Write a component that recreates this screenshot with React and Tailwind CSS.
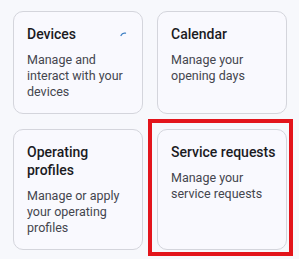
import React from 'react';

const cards = [
  { title: 'Devices', desc: 'Manage and interact with your devices', spinner: true },
  { title: 'Calendar', desc: 'Manage your opening days' },
  { title: 'Operating profiles', desc: 'Manage or apply your operating profiles' },
  { title: 'Service requests', desc: 'Manage your service requests', highlight: true },
];

const Card = ({ title, desc, spinner, highlight }) => (
  <div className="relative">
    <div className="h-full rounded-[10px] border border-[#d4d5dc] bg-[#f9f9fe] pl-[13px] pr-[6px] pt-[13px] pb-[13px]">
      <div className="text-[14px] leading-[18px] font-medium text-[#1b1b1f]">{title}</div>
      <div className="mt-[9px] pr-[6px] text-[12.5px] leading-[16px] text-[#44464e]">{desc}</div>
    </div>
    {spinner && (
      <svg className="absolute left-[106px] top-[17px]" width="10" height="10" viewBox="0 0 10 10">
        <path d="M2 7.5 A4 4 0 0 1 6.5 5.2" fill="none" stroke="#3d7fc4" strokeWidth="1.3" strokeLinecap="round" />
      </svg>
    )}
    {highlight && (
      <div className="pointer-events-none absolute -left-[9px] -top-[10px] -right-[6px] -bottom-[6px] border-[4px] border-[#e3141b]" />
    )}
  </div>
);

export default function App() {
  return (
    <div
      className="w-[299px] h-[259px] overflow-hidden bg-[#f7f8fc] pl-[13px] pt-[11px]"
      style={{ fontFamily: 'Roboto, "Noto Sans", sans-serif' }}
    >
      <div className="grid grid-cols-[130px_130px] gap-x-[14px] gap-y-[15px]">
        {cards.map((c) => (
          <Card key={c.title} {...c} />
        ))}
      </div>
    </div>
  );
}
